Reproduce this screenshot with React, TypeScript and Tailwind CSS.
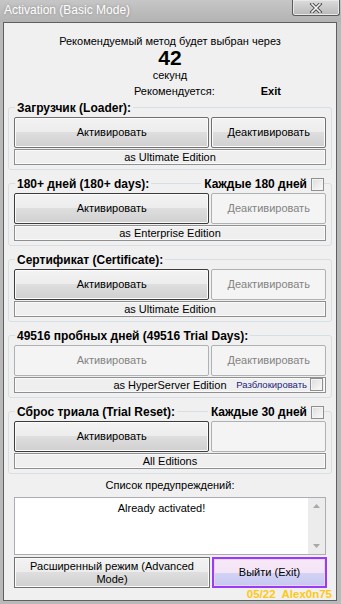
import React from "react";

const font = "font-['Liberation_Sans',Arial,sans-serif]";
const activeBtn =
  "border-[#707070] bg-[linear-gradient(#f3f3f3_0%,#ececec_50%,#dedede_50%,#d0d0d0_100%)] shadow-[inset_0_0_0_1px_#fbfbfb] text-black";
const defaultBtn =
  "border-[#3c3c3c] bg-[linear-gradient(#f3f3f3_0%,#ececec_50%,#dedede_50%,#d0d0d0_100%)] shadow-[inset_0_0_0_1px_#fbfbfb] text-black";
const disabledBtn = "border-[#adb2b5] bg-[#f4f4f4] text-[#838383]";

function Btn({ kind, label, className }: { kind: "active" | "default" | "disabled"; label?: string; className: string }) {
  const look = kind === "active" ? activeBtn : kind === "default" ? defaultBtn : disabledBtn;
  return (
    <div className={`flex h-[31px] items-center justify-center rounded-[2px] border text-[11px] ${look} ${className}`}>
      {label}
    </div>
  );
}

function Check() {
  return (
    <span className="block h-[13px] w-[13px] shrink-0 border border-[#8e8f8f] bg-[linear-gradient(135deg,#dcdcdc,#fbfbfb)] shadow-[inset_0_0_0_1px_#f4f4f4]" />
  );
}

interface GroupProps {
  title: string;
  right?: string;
  activate: "active" | "default" | "disabled";
  deactivate: "active" | "disabled";
  deactivateLabel?: string;
  edition: string;
  unlock?: boolean;
  className?: string;
}

function Group({ title, right, activate, deactivate, deactivateLabel, edition, unlock, className }: GroupProps) {
  return (
    <div className={`relative mx-[4px] rounded-[3px] border border-[#d5dfe5] px-[5px] pb-[4px] pt-[9px] ${className ?? ""}`}>
      <span className="absolute left-[6px] top-[-7px] bg-[#f0f0f0] px-[2px] text-[12px] font-bold leading-[14px]">
        {title}
      </span>
      {right && (
        <span className="absolute right-[7px] top-[-7px] flex items-center gap-[4px] bg-[#f0f0f0] pl-[3px] text-[12px] font-bold leading-[14px]">
          {right}
          <Check />
        </span>
      )}
      <div className="flex gap-[2px]">
        <Btn kind={activate} label="Активировать" className="w-[196px]" />
        <Btn kind={deactivate} label={deactivateLabel} className="w-[115px]" />
      </div>
      <div className="relative mt-[1px] flex h-[16px] items-center justify-center border border-[#8f8f8f] bg-[#efefef] text-[11px] leading-[14px] shadow-[inset_0_0_0_1px_#fafafa]">
        {edition}
        {unlock && (
          <span className="absolute right-[2px] top-[0px] flex items-center gap-[3px] text-[9.5px] leading-[12px] text-[#1c1c7a]">
            Разблокировать
            <Check />
          </span>
        )}
      </div>
    </div>
  );
}

export default function App() {
  return (
    <div className={`relative h-[604px] w-[341px] overflow-hidden bg-[#b9b9b9] ${font}`}>
      <div className="flex h-[22px] items-start bg-[linear-gradient(#c6c6c6,#b3b3b3)]">
        <span className="ml-[4px] mt-[3px] text-[12px] leading-[15px] text-white [text-shadow:0_0_3px_#8a8a8a]">
          Activation (Basic Mode)
        </span>
        <div className="ml-auto mr-[1px] flex h-[16px] w-[48px] items-center justify-center rounded-b-[3px] border border-t-0 border-[#5b5b5b] bg-[linear-gradient(#dcdcdc,#b9b9b9)] shadow-[inset_0_0_0_1px_#e8e8e8]">
          <svg width="14" height="10" viewBox="0 0 14 10">
            <path d="M3 1 L11 9 M11 1 L3 9" stroke="#4a4a4a" strokeWidth="3.4" strokeLinecap="square" />
            <path d="M3 1 L11 9 M11 1 L3 9" stroke="#f4f4f4" strokeWidth="1.6" strokeLinecap="square" />
          </svg>
        </div>
      </div>

      <div className="ml-[3px] h-[579px] w-[334px] border border-[#5f5f5f] bg-[#f0f0f0] pt-[11px] text-black">
        <div className="text-center text-[11px] leading-[14px]">Рекомендуемый метод будет выбран через</div>
        <div className="text-center text-[21px] font-bold leading-[20px]">42</div>
        <div className="text-center text-[11px] leading-[14px]">секунд</div>
        <div className="mt-[2px] flex text-[11px] leading-[14px]">
          <span className="ml-[130px]">Рекомендуется:</span>
          <span className="ml-[46px] font-bold">Exit</span>
        </div>

        <Group
          className="mt-[9px]"
          title="Загрузчик (Loader):"
          activate="active"
          deactivate="active"
          deactivateLabel="Деактивировать"
          edition="as Ultimate Edition"
        />
        <Group
          className="mt-[13px]"
          title="180+ дней (180+ days):"
          right="Каждые 180 дней"
          activate="default"
          deactivate="disabled"
          deactivateLabel="Деактивировать"
          edition="as Enterprise Edition"
        />
        <Group
          className="mt-[13px]"
          title="Сертификат (Certificate):"
          activate="default"
          deactivate="disabled"
          deactivateLabel="Деактивировать"
          edition="as Ultimate Edition"
        />
        <Group
          className="mt-[13px]"
          title="49516 пробных дней (49516 Trial Days):"
          activate="disabled"
          deactivate="disabled"
          deactivateLabel="Деактивировать"
          edition="as HyperServer Edition"
          unlock
        />
        <Group
          className="mt-[13px]"
          title="Сброс триала (Trial Reset):"
          right="Каждые 30 дней"
          activate="default"
          deactivate="disabled"
          edition="All Editions"
        />

        <div className="mt-[4px] text-center text-[11px] leading-[14px]">Список предупреждений:</div>
        <div className="ml-[10px] mt-[5px] flex h-[58px] w-[312px] border border-[#abadb3] bg-white">
          <div className="flex-1 pt-[3px] text-center text-[11px] leading-[14px]">Already activated!</div>
          <div className="flex w-[17px] flex-col items-center justify-between bg-[#ececec] py-[6px]">
            <svg width="7" height="4" viewBox="0 0 7 4"><path d="M0 4 L3.5 0 L7 4 Z" fill="#a8a8a8" /></svg>
            <svg width="7" height="4" viewBox="0 0 7 4"><path d="M0 0 L3.5 4 L7 0 Z" fill="#a8a8a8" /></svg>
          </div>
        </div>
        <div className="ml-[10px] mt-[2px] flex gap-[2px]">
          <div className={`flex h-[31px] w-[196px] items-center justify-center border text-center text-[11px] leading-[13px] ${activeBtn}`}>
            Расширенный режим (Advanced
            <br />
            Mode)
          </div>
          <div className="flex h-[31px] w-[115px] items-center justify-center border-2 border-[#9a3cf6] bg-[linear-gradient(#f8e9f8_0%,#f3e4f6_50%,#d3d3f5_50%,#c7c8f1_100%)] text-[11px] shadow-[inset_0_0_0_1px_#e4d6fb]">
            Выйти (Exit)
          </div>
        </div>
        <div className="mr-[4px] text-right text-[11.5px] font-bold leading-[12px] text-[#ffc812]">05/22&nbsp; Alex0n75</div>
      </div>
    </div>
  );
}
